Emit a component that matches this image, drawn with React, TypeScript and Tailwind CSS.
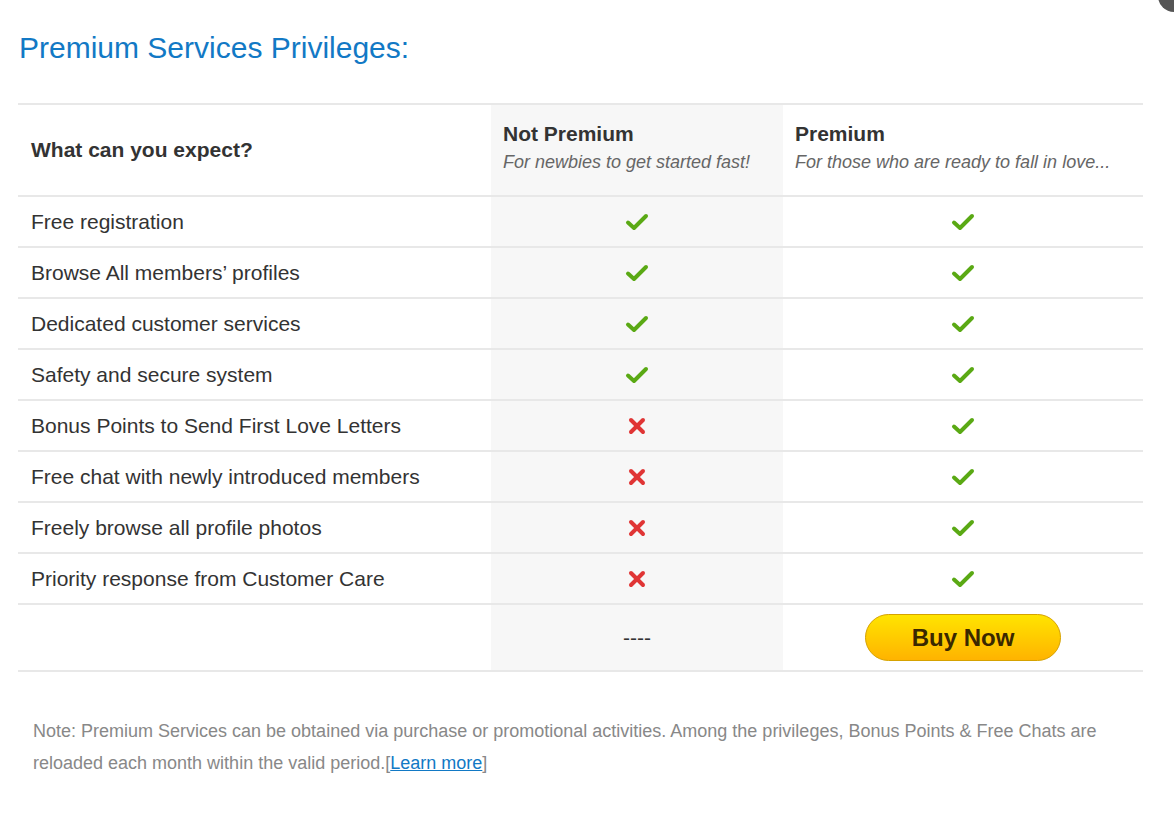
import React from "react";

const rows: { label: string; basic: boolean }[] = [
  { label: "Free registration", basic: true },
  { label: "Browse All members’ profiles", basic: true },
  { label: "Dedicated customer services", basic: true },
  { label: "Safety and secure system", basic: true },
  { label: "Bonus Points to Send First Love Letters", basic: false },
  { label: "Free chat with newly introduced members", basic: false },
  { label: "Freely browse all profile photos", basic: false },
  { label: "Priority response from Customer Care", basic: false },
];

const Check = () => (
  <svg width="24" height="20" viewBox="0 0 24 20" className="inline-block">
    <polyline
      points="3,10.5 9,16 21,4"
      fill="none"
      stroke="#5aa914"
      strokeWidth="4"
      strokeLinecap="round"
      strokeLinejoin="round"
    />
  </svg>
);

const Cross = () => (
  <svg width="20" height="20" viewBox="0 0 20 20" className="inline-block">
    <g stroke="#e03535" strokeWidth="4" strokeLinecap="round">
      <line x1="4" y1="4" x2="16" y2="16" />
      <line x1="16" y1="4" x2="4" y2="16" />
    </g>
  </svg>
);

export default function App() {
  return (
    <div className="relative min-h-[817px] w-[1174px] overflow-hidden bg-white px-[18px] pt-[30px] font-['Liberation_Sans',Arial,sans-serif]">
      {/* corner of a floating widget peeking in */}
      <div className="absolute -right-[16px] -top-[20px] h-[32px] w-[32px] rounded-full bg-[#555]" />

      <h1 className="pl-px text-[30px] leading-[36px] text-[#1279c5]">Premium Services Privileges:</h1>

      <table className="mt-[37px] w-[1125px] table-fixed border-collapse text-[#333]">
        <colgroup>
          <col className="w-[473px]" />
          <col className="w-[292px]" />
          <col className="w-[360px]" />
        </colgroup>
        <thead>
          <tr className="h-[92px] border-y-2 border-[#e8e8e8]">
            <th className="pl-[13px] text-left align-middle text-[21px] font-bold">What can you expect?</th>
            <th className="bg-[#f7f7f7] pl-[12px] pt-[16px] text-left align-top">
              <div className="text-[21px] font-bold leading-[26px]">Not Premium</div>
              <div className="mt-[3px] text-[18px] font-normal italic leading-[24px] text-[#666]">
                For newbies to get started fast!
              </div>
            </th>
            <th className="pl-[12px] pt-[16px] text-left align-top">
              <div className="text-[21px] font-bold leading-[26px]">Premium</div>
              <div className="mt-[3px] text-[18px] font-normal italic leading-[24px] text-[#666]">
                For those who are ready to fall in love...
              </div>
            </th>
          </tr>
        </thead>
        <tbody>
          {rows.map((r) => (
            <tr key={r.label} className="h-[51px] border-b-2 border-[#e8e8e8]">
              <td className="pl-[13px] text-[21px]">{r.label}</td>
              <td className="bg-[#f7f7f7] text-center">{r.basic ? <Check /> : <Cross />}</td>
              <td className="text-center">
                <Check />
              </td>
            </tr>
          ))}
          <tr className="h-[67px] border-b-2 border-[#e8e8e8]">
            <td />
            <td className="bg-[#f7f7f7] text-center text-[21px] text-[#333]">----</td>
            <td className="text-center">
              <button className="inline-flex h-[47px] w-[196px] items-center justify-center rounded-full border border-[#d6a200] bg-gradient-to-b from-[#ffe400] to-[#ffb300] text-[24px] font-bold text-[#3a2800]">
                Buy Now
              </button>
            </td>
          </tr>
        </tbody>
      </table>

      <p className="mt-[43px] pl-[15px] pr-[40px] text-[18px] leading-[32px] text-[#888]">
        Note: Premium Services can be obtained via purchase or promotional activities. Among the privileges, Bonus Points &amp; Free Chats are reloaded each month within the valid period.
        <span>
          [<a href="#" className="text-[#1279c5] underline">Learn more</a>]
        </span>
      </p>
    </div>
  );
}
